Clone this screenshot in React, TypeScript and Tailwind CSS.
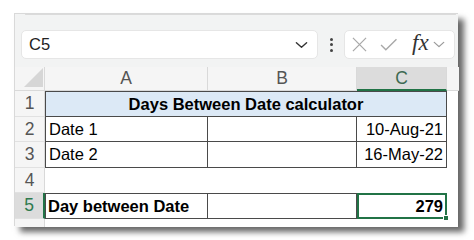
import React from "react";

const font = { fontFamily: '"Liberation Sans", Arial, sans-serif' };

function Chevron({ className }: { className?: string }) {
  return (
    <svg viewBox="0 0 14 8" className={className} fill="none" stroke="currentColor" strokeWidth="1.5" strokeLinecap="round" strokeLinejoin="round">
      <path d="M1.5 1.5 L7 6.5 L12.5 1.5" />
    </svg>
  );
}

function FormulaBar() {
  return (
    <div className="flex items-center h-[29px] mt-[15px] ml-[6px]">
      <div className="w-[297px] h-[29px] bg-white rounded-[5px] border border-[#e6e6e6] flex items-center justify-between pl-[7px] pr-[9px]">
        <span className="text-[16.5px] text-[#222]">C5</span>
        <Chevron className="w-[13px] h-[8px] text-[#333]" />
      </div>
      <div className="w-[26px] flex flex-col items-center gap-[2.5px]">
        <span className="w-[3px] h-[3px] rounded-full bg-[#444]" />
        <span className="w-[3px] h-[3px] rounded-full bg-[#444]" />
        <span className="w-[3px] h-[3px] rounded-full bg-[#444]" />
      </div>
      <div className="w-[111px] h-[29px] bg-white rounded-[5px] border border-[#e6e6e6] flex items-center pl-[7px]">
        <svg viewBox="0 0 16 16" className="w-[15px] h-[15px]" fill="none" stroke="#a8a8a8" strokeWidth="1.3">
          <path d="M1 1 L15 15 M15 1 L1 15" />
        </svg>
        <svg viewBox="0 0 16 12" className="w-[17px] h-[13px] ml-[13px]" fill="none" stroke="#a8a8a8" strokeWidth="1.3">
          <path d="M1 6.5 L5.5 11 L15.5 1" />
        </svg>
        <span className="ml-[15px] text-[23px] italic text-[#333] leading-none -mt-[4px]" style={{ fontFamily: '"Liberation Serif", "Times New Roman", serif' }}>
          fx
        </span>
        <Chevron className="ml-[4px] w-[12px] h-[7px] text-[#9a9a9a]" />
      </div>
    </div>
  );
}

function RowHead({ n, h, active }: { n: number; h: string; active?: boolean }) {
  return (
    <div
      className={`${h} flex items-center justify-center text-[17.5px] border-b border-[#e1e1e1] ${
        active ? "bg-[#dcdcdc] text-[#2f7a4e] border-r-2 border-r-[#217346]" : "bg-[#f5f5f5] text-[#555] border-r border-r-[#d9d9d9]"
      }`}
    >
      {n}
    </div>
  );
}

export default function App() {
  const dark = "border-[#4a4a4a]";
  return (
    <div className="w-[474px] h-[240px] bg-white overflow-hidden" style={font}>
      <div className="ml-[14px] mt-[13px] w-[444px] h-[213px] bg-[#f2f3f3] border-t border-l border-[#d9d9d9] shadow-[6px_6px_6px_rgba(0,0,0,0.6)] flex flex-col">
        <div className="ml-[10px] mr-[2px] h-[3px] bg-white rounded-b-[4px] border-b border-x border-[#dadada]" />
        <FormulaBar />
        <div className="mt-[8px] grid grid-cols-[30px_163px_149px_90px_12px] grid-rows-[24px_26px_25px_26px_25px_26px_8px] bg-white">
          {/* header row */}
          <div className="bg-[#f5f5f5] border-r border-b border-[#d9d9d9] relative overflow-hidden">
            <svg viewBox="0 0 20 20" className="absolute right-[1px] bottom-[3px] w-[19px] h-[19px]">
              <path d="M20 0 L20 20 L0 20 Z" fill="#d6d6d6" />
            </svg>
          </div>
          <div className="bg-[#f5f5f5] border-r border-b border-[#d9d9d9] flex items-center justify-center text-[17.5px] text-[#555]">A</div>
          <div className="bg-[#f5f5f5] border-r border-b border-[#d9d9d9] flex items-center justify-center text-[17.5px] text-[#555]">B</div>
          <div className="bg-[#dcdcdc] border-r border-[#d9d9d9] border-b-2 border-b-[#217346] flex items-center justify-center text-[17.5px] text-[#3d6a52]">C</div>
          <div className="bg-[#f5f5f5] border-b border-[#d9d9d9]" />

          {/* row 1 */}
          <RowHead n={1} h="h-[26px]" />
          <div className={`col-span-3 bg-[#dce9f6] border ${dark} flex items-center justify-center text-[16.5px] font-bold text-black`}>
            Days Between Date calculator
          </div>
          <div />

          {/* row 2 */}
          <RowHead n={2} h="h-[25px]" />
          <div className={`border-l border-r border-b ${dark} flex items-center pl-[3px] text-[16.5px] text-black`}>Date 1</div>
          <div className={`border-r border-b ${dark}`} />
          <div className={`border-r border-b ${dark} flex items-center justify-end pr-[3px] text-[16.5px] text-black`}>10-Aug-21</div>
          <div />

          {/* row 3 */}
          <RowHead n={3} h="h-[26px]" />
          <div className={`border-l border-r border-b ${dark} flex items-center pl-[3px] text-[16.5px] text-black`}>Date 2</div>
          <div className={`border-r border-b ${dark}`} />
          <div className={`border-r border-b ${dark} flex items-center justify-end pr-[3px] text-[16.5px] text-black`}>16-May-22</div>
          <div />

          {/* row 4 */}
          <RowHead n={4} h="h-[25px]" />
          <div />
          <div />
          <div />
          <div />

          {/* row 5 */}
          <RowHead n={5} h="h-[26px]" active />
          <div className={`border ${dark} flex items-center pl-[2px] text-[16.5px] font-bold text-black`}>Day between Date</div>
          <div className={`border-t border-b border-r ${dark}`} />
          <div className="relative border-2 border-[#217346] flex items-center justify-end pr-[2px] text-[16.5px] font-bold text-black">
            279
            <span className="absolute -right-[4px] -bottom-[4px] w-[6px] h-[6px] bg-[#217346] border border-white" />
          </div>
          <div />

          {/* row 6 partial */}
          <div className="bg-[#f5f5f5] border-r border-[#d9d9d9]" />
          <div />
          <div />
          <div />
          <div />
        </div>
      </div>
    </div>
  );
}
